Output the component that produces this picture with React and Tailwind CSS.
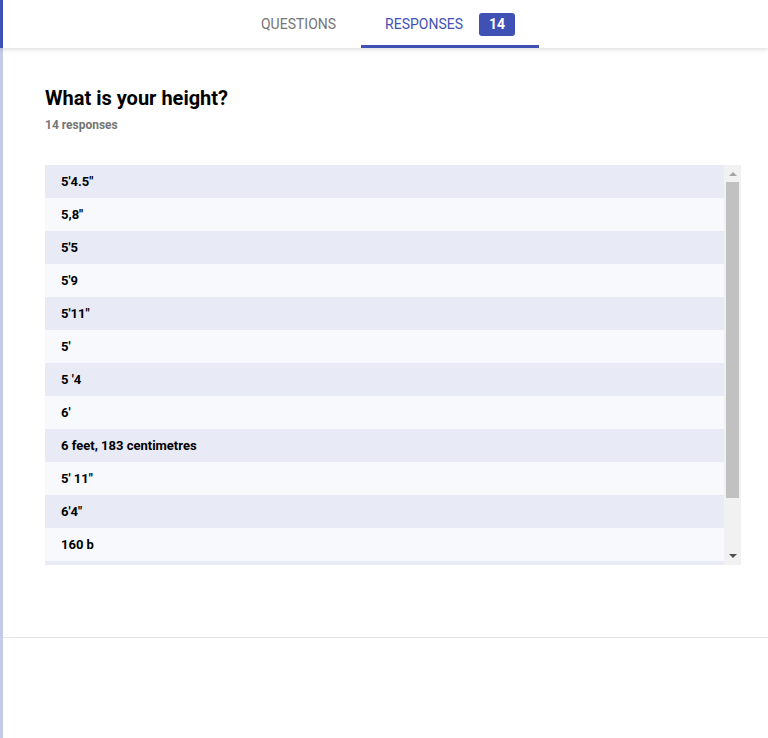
// App.jsx
const answers = [
  '5\'4.5"',
  '5,8"',
  "5'5",
  "5'9",
  '5\'11"',
  "5'",
  "5 '4",
  "6'",
  '6 feet, 183 centimetres',
  '5\' 11"',
  '6\'4"',
  '160 b',
];

// fake classic scrollbar (headless chrome uses overlay bars)
function ScrollBar() {
  return (
    <div className="flex w-[17px] shrink-0 flex-col items-center bg-[#f1f1f1]">
      <svg width="8" height="17" viewBox="0 0 8 17" className="shrink-0">
        <path d="M0 11 L4 7 L8 11 Z" fill="#a3a3a3" />
      </svg>
      <div className="h-[316px] w-[13px] shrink-0 bg-[#c1c1c1]" />
      <div className="flex-1" />
      <svg width="8" height="17" viewBox="0 0 8 17" className="shrink-0">
        <path d="M0 6 L8 6 L4 10 Z" fill="#505050" />
      </svg>
    </div>
  );
}

export default function App() {
  return (
    <div className="min-h-[738px] bg-white font-['Roboto',sans-serif] text-black">
      {/* Header tabs */}
      <header className="relative z-10 h-12 border-l-[3px] border-[#3f51b5] bg-white shadow-[0_2px_4px_rgba(0,0,0,0.12)]">
        <nav className="flex h-full items-stretch justify-center pl-[5px]">
          <div className="flex items-center pl-6 pr-[25px] text-sm uppercase text-[#757575]">Questions</div>
          <div className="relative flex items-center gap-4 px-6 text-sm uppercase text-[#3f51b5]">
            <span>Responses</span>
            <span className="flex h-[23px] w-9 items-center justify-center rounded-[3px] bg-[#3f51b5] text-sm font-bold text-white">
              14
            </span>
            <div className="absolute bottom-0 left-0 right-0 h-[3px] bg-[#3f51b5]" />
          </div>
        </nav>
      </header>

      {/* Body */}
      <main className="h-[690px] border-l-[3px] border-[#c5cae9]">
        <section className="px-[42px] pt-[36px] pb-[72px]">
          <h2 className="text-xl font-bold leading-7">What is your height?</h2>
          <p className="mt-[5px] text-xs font-bold text-[#757575]">14 responses</p>

          <div className="mt-[32px] flex h-[400px] w-[696px] overflow-hidden">
            <div className="flex-1">
              {answers.map((a, i) => (
                <div
                  key={i}
                  className={`flex h-[33px] items-center px-4 text-[13px] font-bold ${
                    i % 2 === 0 ? 'bg-[#e8eaf6]' : 'bg-[#f8f9fd]'
                  }`}
                >
                  {a}
                </div>
              ))}
              <div className="h-[4px] bg-[#e8eaf6]" />
            </div>
            <ScrollBar />
          </div>
        </section>
        <div className="h-px bg-[#e6e6e6]" />
      </main>
    </div>
  );
}
